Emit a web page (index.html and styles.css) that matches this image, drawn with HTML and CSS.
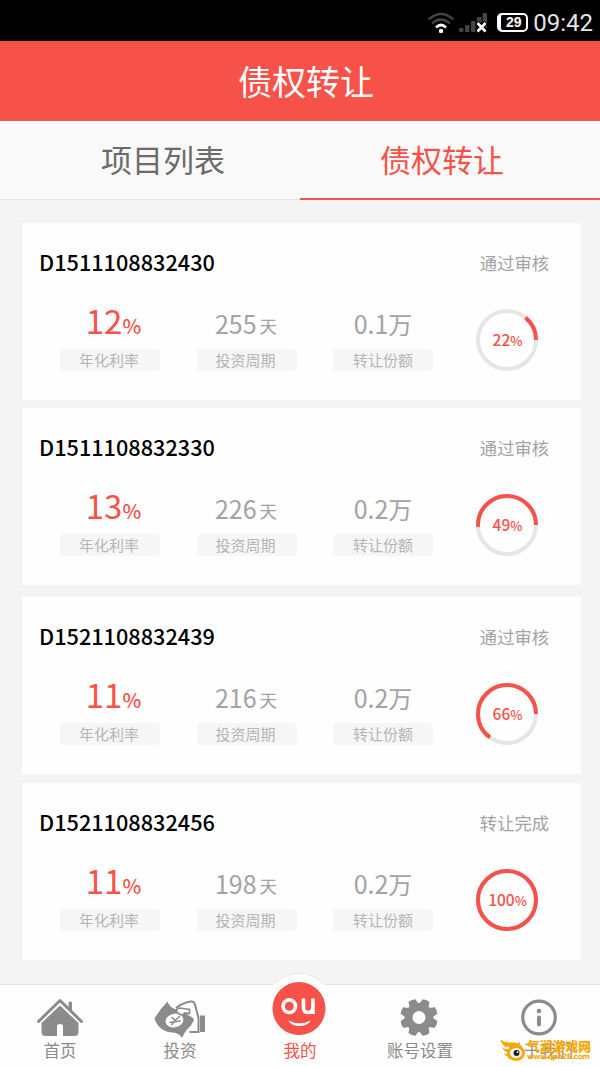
FILE: index.html
```html
<!DOCTYPE html>
<html lang="zh-CN">
<head>
  <meta charset="UTF-8">
  <title>债权转让</title>
  <meta name="viewport" content="width=device-width, initial-scale=1.0">
  <link rel="stylesheet" href="styles.css">
</head>
<body>
  <div class="app">

    <!-- 状态栏 -->
    <div class="status-bar">
      <svg class="wifi" width="28" height="22" viewBox="0 0 28 22" fill="none" stroke-width="2.2">
        <path d="M1.5 7.5Q14-3.5 26.5 7.5" stroke="#444"/>
        <path d="M5 11.5Q14 3.5 23 11.5" stroke="#444"/>
        <path d="M9 15.5Q14 10.5 19 15.5" stroke="#fff" stroke-width="2.6"/>
        <circle cx="14" cy="19" r="2.2" fill="#fff"/>
      </svg>
      <svg class="signal" width="29" height="22" viewBox="0 0 29 22">
        <g fill="#444">
          <rect x="0" y="16" width="4.5" height="4" rx="1"/>
          <rect x="6" y="13" width="4.5" height="7" rx="1"/>
          <rect x="12" y="9" width="4.5" height="11" rx="1"/>
          <rect x="18" y="5" width="4.5" height="10" rx="1"/>
          <rect x="23.5" y="1" width="4.5" height="19" rx="1"/>
        </g>
        <path d="M18 10.500l9 9M27 10.500l-9 9" stroke="#000" stroke-width="5"/>
        <path d="M18.500 11l8 8.500M26.500 11l-8 8.500" stroke="#fff" stroke-width="2.600"/>
      </svg>
      <span class="battery">29</span>
      <span class="clock">09:42</span>
    </div>

    <!-- 标题 -->
    <header class="title-bar"><h1>债权转让</h1></header>

    <!-- 选项卡 -->
    <div class="tabs">
      <a class="tab">项目列表</a>
      <a class="tab active">债权转让</a>
    </div>

    <!-- 列表 -->
    <main class="list">
      <section class="card">
        <div class="card-head">
          <h2>D1511108832430</h2>
          <span class="state">通过审核</span>
        </div>
        <div class="card-body">
          <div class="stat rate"><div class="value">12<b>%</b></div><div class="label">年化利率</div></div>
          <div class="stat"><div class="value"><span>255<small>天</small></span></div><div class="label">投资周期</div></div>
          <div class="stat"><div class="value"><span>0.1<i>万</i></span></div><div class="label">转让份额</div></div>
          <div class="ring">
            <svg width="62" height="62" viewBox="0 0 62 62">
              <circle class="track" cx="31" cy="31" r="29"/>
              <circle class="bar" cx="31" cy="31" r="29" pathLength="100" stroke-dasharray="14 100"/>
            </svg>
            <span class="percent">22<small>%</small></span>
          </div>
        </div>
      </section>

      <section class="card">
        <div class="card-head">
          <h2>D1511108832330</h2>
          <span class="state">通过审核</span>
        </div>
        <div class="card-body">
          <div class="stat rate"><div class="value">13<b>%</b></div><div class="label">年化利率</div></div>
          <div class="stat"><div class="value"><span>226<small>天</small></span></div><div class="label">投资周期</div></div>
          <div class="stat"><div class="value"><span>0.2<i>万</i></span></div><div class="label">转让份额</div></div>
          <div class="ring">
            <svg width="62" height="62" viewBox="0 0 62 62">
              <circle class="track" cx="31" cy="31" r="29"/>
              <circle class="bar" cx="31" cy="31" r="29" pathLength="100" stroke-dasharray="51 100"/>
            </svg>
            <span class="percent">49<small>%</small></span>
          </div>
        </div>
      </section>

      <section class="card">
        <div class="card-head">
          <h2>D1521108832439</h2>
          <span class="state">通过审核</span>
        </div>
        <div class="card-body">
          <div class="stat rate"><div class="value">11<b>%</b></div><div class="label">年化利率</div></div>
          <div class="stat"><div class="value"><span>216<small>天</small></span></div><div class="label">投资周期</div></div>
          <div class="stat"><div class="value"><span>0.2<i>万</i></span></div><div class="label">转让份额</div></div>
          <div class="ring">
            <svg width="62" height="62" viewBox="0 0 62 62">
              <circle class="track" cx="31" cy="31" r="29"/>
              <circle class="bar" cx="31" cy="31" r="29" pathLength="100" stroke-dasharray="65 100"/>
            </svg>
            <span class="percent">66<small>%</small></span>
          </div>
        </div>
      </section>

      <section class="card">
        <div class="card-head">
          <h2>D1521108832456</h2>
          <span class="state">转让完成</span>
        </div>
        <div class="card-body">
          <div class="stat rate"><div class="value">11<b>%</b></div><div class="label">年化利率</div></div>
          <div class="stat"><div class="value"><span>198<small>天</small></span></div><div class="label">投资周期</div></div>
          <div class="stat"><div class="value"><span>0.2<i>万</i></span></div><div class="label">转让份额</div></div>
          <div class="ring">
            <svg width="62" height="62" viewBox="0 0 62 62">
              <circle class="track" cx="31" cy="31" r="29"/>
              <circle class="bar" cx="31" cy="31" r="29" pathLength="100" stroke-dasharray="100 100"/>
            </svg>
            <span class="percent">100<small>%</small></span>
          </div>
        </div>
      </section>
    </main>

    <!-- 底部导航 -->
    <nav class="nav">
      <a class="nav-item">
        <svg width="48" height="40" viewBox="0 0 48 40">
          <path d="M2.500 24.500L24 3.500l21.500 21" fill="none" stroke="#8b8b8b" stroke-width="3" stroke-linecap="round" stroke-linejoin="round"/>
          <path d="M32.500 5.500q2-2 3.500 0v9l-3.500-3.500z" fill="#8b8b8b"/>
          <path d="M24 8.500L42.500 26v9q0 4-4 4H27V29q0-2-3-2t-3 2v10H9.500q-4 0-4-4v-9z" fill="#8b8b8b"/>
        </svg>
        <span>首页</span>
      </a>
      <a class="nav-item">
        <svg width="52" height="40" viewBox="0 0 52 40">
          <path d="M22 11q5-4.500 14.500-6.500 3.500-.5 4.500 3l3.500 13.500v14h-9" fill="#fff" stroke="#8b8b8b" stroke-width="2"/>
          <path d="M.500 21.500Q6 12 13.500 4.500q2 6.500 9.500 8 11 1 14 5.500 2.500 2 3 4-2.500 6-7 10.500-3 3.500-5 8.500-2.500-5-9-5.500Q5 35 .500 21.500z" fill="#8b8b8b"/>
          <ellipse cx="20.500" cy="23.500" rx="9" ry="6.800" fill="#fff" transform="rotate(-14 20.500 23.500)"/>
          <path d="M17.500 20l3.500 3.500 5-4.500M15.500 25.500l11-1.500M17.500 28l3.500-4.500" fill="none" stroke="#8b8b8b" stroke-width="1.500"/>
          <path d="M27 15l12-1 3 8-1 6q-1-9-14-13z" fill="#fff"/>
          <path d="M23.500 16q-2.500-4 2-5l10 1.500v4l-5-.5q-1 2-3 2z" fill="#fff" stroke="#8b8b8b" stroke-width="1.700"/>
          <path d="M28 17q11 2 12 6-2 5-7 9.500z" fill="#8b8b8b"/>
          <path d="M46 18.500h5V35h-5z" fill="#8b8b8b"/>
        </svg>
        <span>投资</span>
      </a>
      <a class="nav-item active">
        <svg class="mine" width="62" height="68" viewBox="0 0 62 68">
          <path d="M4 13.500A34 34 0 0 1 56 13.500L59 30H1z" fill="#fefefe"/>
          <path d="M6 12.500A33 33 0 0 1 54 12.500" fill="none" stroke="#e2e2e2" stroke-width="1"/>
          <circle cx="30" cy="37.500" r="26.500" fill="#f6524a"/>
          <circle cx="20.300" cy="35.200" r="6.300" fill="none" stroke="#fff" stroke-width="3.600"/>
          <path d="M34.500 27.500v9q0 5 4.500 5t5-5v-9M44 27.500v15.500" fill="none" stroke="#fff" stroke-width="3.600"/>
          <path d="M19 49.500q12 5.500 23 0-4 5.500-11.500 5.500T19 49.500z" fill="#fff"/>
        </svg>
        <span>我的</span>
      </a>
      <a class="nav-item">
        <svg width="40" height="40" viewBox="-19 -20.500 40 40">
          <g fill="#8b8b8b">
            <g id="teeth">
              <path id="tooth" d="M-6-12q2-2 2.200-6.300 3.800-1.400 7.600 0Q4-14 6-12z" transform="rotate(22.500)"/>
              <use href="#tooth" transform="rotate(45)"/>
              <use href="#tooth" transform="rotate(90)"/>
              <use href="#tooth" transform="rotate(135)"/>
            </g>
            <use href="#teeth" transform="rotate(180)"/>
          </g>
          <circle r="10" fill="none" stroke="#8b8b8b" stroke-width="7"/>
        </svg>
        <span>账号设置</span>
      </a>
      <a class="nav-item">
        <svg width="38" height="40" viewBox="0 0 38 40">
          <circle cx="18" cy="20.500" r="16.300" fill="none" stroke="#8b8b8b" stroke-width="3.200"/>
          <circle cx="18" cy="14" r="2.300" fill="#8b8b8b"/>
          <path d="M18 20.500v7" stroke="#8b8b8b" stroke-width="4" stroke-linecap="round"/>
        </svg>
        <span>关于我们</span>
      </a>
    </nav>

    <!-- 水印 -->
    <div class="watermark">
      <svg width="27" height="24" viewBox="0 0 27 24">
        <path d="M0 1q4 4 12 3.500 7-.5 10 4.500l-3 2Q12 6 7 9 2 8 0 1z" fill="#f8a900"/>
        <path d="M2 9q3 3 7 2l-1 3q-4 0-6-5zM4 15q2 2 5 1v3q-4-1-5-4z" fill="#f8a900"/>
        <ellipse cx="16" cy="15" rx="7.500" ry="6.500" fill="#fff" stroke="#f8a900" stroke-width="3"/>
        <circle cx="16.500" cy="15" r="3" fill="#1b1b1b"/>
        <circle cx="17.500" cy="14.200" r=".9" fill="#fff"/>
      </svg>
      <div class="watermark-text">
        <strong>气润游戏网</strong>
        <em>www.qpb28.com</em>
      </div>
    </div>
  </div>
</body>
</html>
```
FILE: styles.css
```css
* {
  box-sizing: border-box;
}

body {
  margin: 0;
  font-family: "Noto Sans CJK SC", sans-serif;
  background: #f4f4f4;
}

.app {
  position: relative;
  display: flex;
  flex-direction: column;
  width: 600px;
  height: 1067px;
  overflow: hidden;
}

h1, h2 {
  margin: 0;
  font-weight: 400;
}

.status-bar {
  display: flex;
  align-items: center;
  justify-content: flex-end;
  height: 41px;
  padding: 4px 7px 0 0;
  background: #000;
  color: #e4e4e4;
}

.wifi {
  margin-right: 4px;
}

.signal {
  margin-right: 9px;
}

.battery {
  width: 31px;
  height: 19px;
  margin-right: 5px;
  border: 2px solid #fff;
  border-left-width: 4px;
  border-radius: 5px;
  font: bold 14px/15px "Liberation Sans", sans-serif;
  color: #fff;
  text-align: center;
}

.clock {
  font: 24px/30px Roboto, sans-serif;
}

.title-bar {
  height: 80px;
  padding-left: 12px;
  background: #f6524a;
  color: #fff;
  text-align: center;
}

.title-bar h1 {
  font-size: 34px;
  line-height: 79px;
}

.tabs {
  display: flex;
  height: 79px;
  background: #f9f9f9;
}

.tab {
  width: 50%;
  border-bottom: 1px solid #e5e5e5;
  padding-left: 26px;
  font-size: 31px;
  line-height: 75px;
  color: #6b6b6b;
  text-align: center;
}

.tab.active {
  padding-left: 0;
  padding-right: 16px;
  border-bottom: 2px solid #f6524a;
  color: #f6524a;
}

.list {
  flex: 1;
  padding: 23px 19px 0 22px;
}

.card {
  height: 177px;
  margin-bottom: 8px;
  padding-top: 28px;
  background: #fefefe;
}

.card:nth-child(2) {
  margin-bottom: 12px;
}

.card:nth-child(3) {
  margin-bottom: 9px;
}

.card-head {
  display: flex;
  justify-content: space-between;
  height: 24px;
  padding: 0 32px 0 17px;
  line-height: 24px;
}

.card-head h2 {
  font-size: 21.7px;
  font-weight: 500;
  line-height: 21px;
  color: #000;
}

.state {
  font-size: 17.3px;
  color: #a3a3a3;
}

.card-body {
  display: flex;
  gap: 36.5px;
  padding: 27px 0 0 38px;
}

.stat {
  width: 100px;
}

.value {
  height: 36px;
  margin-bottom: 11px;
  font-size: 33px;
  line-height: 36px;
  color: #a3a3a3;
  text-align: center;
  white-space: nowrap;
}

.value span {
  font-size: 25px;
  line-height: 1;
}

.value small {
  margin: 0 1px 0 3px;
  font-size: 17.5px;
  vertical-align: 1px;
}

.value i {
  font-size: 24px;
  font-style: normal;
}

.rate .value {
  padding-left: 7px;
  color: #f6524a;
}

.rate b {
  font-size: 20px;
  font-weight: 500;
}

.label {
  height: 22px;
  padding-right: 2px;
  border-radius: 4px;
  background: #f6f6f6;
  font-size: 15px;
  line-height: 22px;
  color: #b5b5b5;
  text-align: center;
}

.stat:nth-child(3) .label {
  padding: 0;
}

.ring {
  display: grid;
  place-items: center;
  width: 62px;
  height: 62px;
  margin: 7px 0 0 6.5px;
}

.ring > * {
  grid-area: 1 / 1;
}

.ring circle {
  fill: none;
  stroke-width: 4;
}

.ring .bar {
  stroke: #f6524a;
  transform: scaleY(-1);
  transform-origin: center;
}

.ring .track {
  stroke: #e6e6e6;
}

.percent {
  padding-left: 1px;
  font-size: 15.5px;
  font-weight: 500;
  line-height: 20px;
  color: #f6524a;
}

.percent small {
  font-size: 13px;
}

.nav {
  display: flex;
  height: 83px;
  border-top: 1px solid #e2e2e2;
  background: #fefefe;
}

.nav-item {
  display: flex;
  flex: 1;
  flex-direction: column;
  align-items: center;
  padding-top: 12px;
  font-size: 16.5px;
  line-height: 26px;
  color: #8b8b8b;
}

.nav-item svg {
  flex-shrink: 0;
  margin-bottom: auto;
  overflow: visible;
}

.nav-item span {
  margin-bottom: 4px;
}

.nav-item.active {
  color: #f6524a;
}

.nav-item .mine {
  margin-top: -26px;
  margin-bottom: -2px;
}

/* 盖在导航右侧的站点标识 */
.watermark {
  position: absolute;
  right: 10px;
  bottom: 5px;
  display: flex;
  align-items: flex-start;
  color: #f8a900;
}

.watermark-text {
  display: flex;
  flex-direction: column;
  width: 63px;
}

.watermark strong {
  font-size: 12.8px;
  font-weight: 900;
  line-height: 15px;
  white-space: nowrap;
}

.watermark em {
  font: bold 7.5px/8px "DejaVu Sans", sans-serif;
  letter-spacing: -0.6px;
  white-space: nowrap;
}
```
